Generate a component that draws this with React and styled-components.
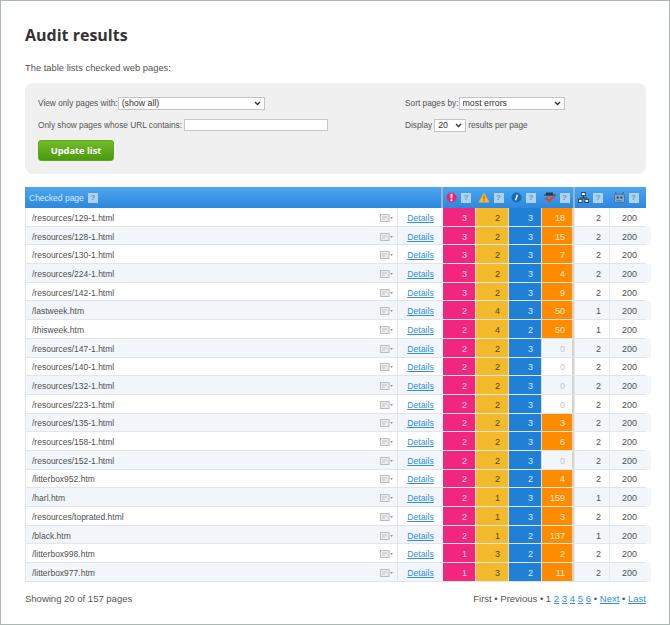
import React from 'react'
import styled, { createGlobalStyle, css } from 'styled-components'

const GlobalStyle = createGlobalStyle`
    html, body {
        margin: 0;
        padding: 0;
        background: #ffffff;
    }
    * {
        box-sizing: border-box;
    }
`;

const Page = styled.div`
    width: 670px;
    height: 625px;
    border: 1px solid #a8b8b3;
    padding: 23px 23px 0 24px;
    font-family: "Liberation Sans", Arial, sans-serif;
    font-size: 8.3px;
    color: #555555;
`;

const Title = styled.h1`
    margin: 0;
    height: 22px;
    line-height: 22px;
    font-family: "Open Sans", sans-serif;
    font-size: 16px;
    font-weight: 700;
    color: #333333;
`;

const Intro = styled.p`
    margin: 15px 0 0;
    height: 13px;
    line-height: 13px;
    font-size: 9.4px;
    color: #555555;
`;

const Panel = styled.div`
    margin-top: 9px;
    height: 91px;
    border-radius: 8px;
    background: #f0f0f0;
    padding: 13px 13px 0;
    display: grid;
    grid-template-columns: 367px 1fr;
`;

const Column = styled.div`
    display: flex;
    flex-direction: column;
    gap: 8px;
`;

const Field = styled.div`
    display: flex;
    align-items: center;
    gap: ${props => props.$gap ?? 2}px;
    height: 14px;
`;

const chevron = `url("data:image/svg+xml,%3Csvg xmlns='http://www.w3.org/2000/svg' width='7' height='5'%3E%3Cpath d='M1 1l2.5 2.5L6 1' fill='none' stroke='%23333' stroke-width='1.4'/%3E%3C/svg%3E")`;

const Select = styled.select`
    appearance: none;
    width: ${props => props.$width}px;
    height: 13px;
    padding: 0 0 0 3px;
    border: 1px solid #c4c4c4;
    border-radius: 0;
    background: #ffffff ${chevron} no-repeat right 3px center;
    font-family: "Liberation Sans", Arial, sans-serif;
    font-size: 8.8px;
    color: #333333;
`;

const TextInput = styled.input`
    width: 144px;
    height: 12px;
    padding: 0;
    border: 1px solid #c8c8c8;
    background: #ffffff;
`;

const UpdateButton = styled.button`
    width: 76px;
    height: 21px;
    padding: 0;
    border: 1px solid #5fa81e;
    border-radius: 3px;
    background: linear-gradient(#74bb2b, #489a0c);
    color: #ffffff;
    font-family: "Open Sans", sans-serif;
    font-size: 9.3px;
    font-weight: 700;
`;

const Table = styled.div`
    margin-top: 13px;
`;

const columns = '372px 46px 32px 33px 33px 33px 35px 37px';

const HeaderRow = styled.div`
    display: grid;
    grid-template-columns: 416px 132px 73px;
    height: 21px;
    background: linear-gradient(#4ea6ef, #2c88de);
    color: #d5e9fa;
    font-size: 8.5px;
`;

const HeaderCell = styled.div`
    display: flex;
    align-items: center;
    gap: 4px;
    justify-content: center;
`;

const PageHeader = styled(HeaderCell)`
    justify-content: flex-start;
    padding-left: 4px;
`;

const HeaderGroup = styled.div`
    display: grid;
    grid-template-columns: ${props => props.$cols};
    border-left: 2px solid #8db6d8;
`;

const Help = styled.span`
    width: 10px;
    height: 10px;
    background: #add3f0;
    color: #6b98bc;
    font-size: 8px;
    font-weight: 700;
    line-height: 10px;
    text-align: center;
`;

const Row = styled.div`
    display: grid;
    grid-template-columns: ${columns};
    height: 18.7px;
    border-bottom: 1px solid #e2e6e9;
    background: ${props => props.$even ? '#f2f6fa' : '#ffffff'};
    box-shadow: ${props => props.$even ? '5px 0 0 #f4f7fa' : 'none'};
`;

// text sits 1px below the middle of the row
const cellText = css`
    display: flex;
    align-items: center;
    padding-top: 2px;
`;

const PageCell = styled.div`
    ${cellText}
    justify-content: space-between;
    padding-left: 6px;
    padding-right: 4px;
    font-size: 8.5px;
    color: #505050;
    border-left: 1px solid #e2e6e9;
`;

const DetailsCell = styled.div`
    ${cellText}
    justify-content: center;
    border-left: 1px solid #e2e6e9;
`;

const TextLink = styled.a`
    color: #2f8fdc;
    text-decoration: underline;
    font-size: ${props => props.$size || 8.7}px;
`;

const Score = styled.div`
    ${cellText}
    justify-content: flex-end;
    padding-right: 8px;
    background: ${props => props.$bg};
    color: ${props => props.$color};
    font-size: 9px;
    & + & {
        border-left: 1px solid #e6dcd2;
    }
`;

const LastScore = styled(Score)`
    border-right: 2px solid #d8d2cc;
    padding-right: 7px;
`;

const Plain = styled.div`
    ${cellText}
    justify-content: flex-end;
    padding-right: ${props => props.$right}px;
    border-left: 1px solid #e8ebee;
    color: #505050;
    font-size: 9px;
`;

const Footer = styled.div`
    margin-top: 11px;
    display: flex;
    justify-content: space-between;
    font-size: 9.5px;
    color: #555555;
`;

const Pager = styled.div`
    display: flex;
    gap: 2.7px;
`;

const ErrorIcon = () => (
    <svg width="11" height="11" viewBox="0 0 12 12">
        <circle cx="6" cy="6" r="5.5" fill="#e8256f" />
        <rect x="5" y="2" width="2" height="5" fill="#fff" />
        <rect x="5" y="8" width="2" height="2" fill="#fff" />
    </svg>
);

const WarnIcon = () => (
    <svg width="12" height="11" viewBox="0 0 13 12">
        <path d="M6.5 0.5 L12.5 11.5 H0.5 Z" fill="#f5b62b" />
        <rect x="6" y="4" width="1" height="4" fill="#7a5a10" />
        <rect x="6" y="9" width="1" height="1" fill="#7a5a10" />
    </svg>
);

const InfoIcon = () => (
    <svg width="11" height="11" viewBox="0 0 12 12">
        <circle cx="6" cy="6" r="5.5" fill="#1c69b4" />
        <path d="M7 3 L5 9" stroke="#fff" strokeWidth="1.6" />
    </svg>
);

const SpellIcon = () => (
    <svg width="12" height="11" viewBox="0 0 12 11">
        <rect x="2" y="0.5" width="7" height="3" fill="#2e3a46" />
        <path d="M0 3 H12" stroke="#2e3a46" />
        <path d="M1.5 5.5 L5 9 L10.5 4" fill="none" stroke="#e2432e" strokeWidth="2.4" />
    </svg>
);

const SiteIcon = () => (
    <svg width="11" height="11" viewBox="0 0 12 12" fill="#ffffff" stroke="#26394a" strokeWidth="1">
        <rect x="4" y="0.5" width="4" height="3.5" />
        <path d="M6 4 V6.5 M2.5 8 V6.5 H9.5 V8" fill="none" />
        <rect x="0.5" y="8" width="4" height="3.5" />
        <rect x="7.5" y="8" width="4" height="3.5" />
    </svg>
);

const RobotIcon = () => (
    <svg width="11" height="11" viewBox="0 0 12 12">
        <path d="M2 0 V3 M10 0 V3" stroke="#3c5a78" />
        <rect x="0.5" y="2.5" width="11" height="9" rx="1" fill="#7fa9cf" stroke="#4a6f92" />
        <rect x="3" y="5" width="2" height="2" fill="#26394a" />
        <rect x="7" y="5" width="2" height="2" fill="#26394a" />
        <path d="M3 9.5 H9" stroke="#26394a" strokeDasharray="1 1" />
    </svg>
);

const MailIcon = () => (
    <svg width="13" height="8" viewBox="0 0 13 8">
        <rect x="0.5" y="0.5" width="8.5" height="7" fill="#ececec" stroke="#bcbcbc" />
        <path d="M2 3 H7 M2 5 H5" stroke="#c4c4c4" />
        <path d="M10 3 H13 L11.5 5 Z" fill="#999999" />
    </svg>
);

const rows = [
    ['/resources/129-1.html', 3, 2, 3, 18, 2],
    ['/resources/128-1.html', 3, 2, 3, 15, 2],
    ['/resources/130-1.html', 3, 2, 3, 7, 2],
    ['/resources/224-1.html', 3, 2, 3, 4, 2],
    ['/resources/142-1.html', 3, 2, 3, 9, 2],
    ['/lastweek.htm', 2, 4, 3, 50, 1],
    ['/thisweek.htm', 2, 4, 2, 50, 1],
    ['/resources/147-1.html', 2, 2, 3, 0, 2],
    ['/resources/140-1.html', 2, 2, 3, 0, 2],
    ['/resources/132-1.html', 2, 2, 3, 0, 2],
    ['/resources/223-1.html', 2, 2, 3, 0, 2],
    ['/resources/135-1.html', 2, 2, 3, 3, 2],
    ['/resources/158-1.html', 2, 2, 3, 6, 2],
    ['/resources/152-1.html', 2, 2, 3, 0, 2],
    ['/litterbox952.htm', 2, 2, 2, 4, 2],
    ['/harl.htm', 2, 1, 3, 159, 1],
    ['/resources/toprated.html', 2, 1, 3, 3, 2],
    ['/black.htm', 2, 1, 2, 137, 1],
    ['/litterbox998.htm', 1, 3, 2, 2, 2],
    ['/litterbox977.htm', 1, 3, 2, 11, 2],
];

const App = () => {
    return (
        <Page>
            <GlobalStyle />
            <Title>Audit results</Title>
            <Intro>The table lists checked web pages:</Intro>
            <Panel>
                <Column>
                    <Field $gap={0}>
                        View only pages with:
                        <Select $width={147} defaultValue="all">
                            <option value="all">(show all)</option>
                        </Select>
                    </Field>
                    <Field>
                        Only show pages whose URL contains:
                        <TextInput type="text" />
                    </Field>
                    <UpdateButton>Update list</UpdateButton>
                </Column>
                <Column>
                    <Field $gap={0}>
                        Sort pages by:
                        <Select $width={106} defaultValue="errors">
                            <option value="errors">most errors</option>
                        </Select>
                    </Field>
                    <Field>
                        Display
                        <Select $width={32} defaultValue="20">
                            <option value="20">20</option>
                        </Select>
                        results per page
                    </Field>
                </Column>
            </Panel>
            <Table>
                <HeaderRow>
                    <PageHeader>Checked page <Help>?</Help></PageHeader>
                    <HeaderGroup $cols="31px 33px 33px 33px">
                        <HeaderCell><ErrorIcon /><Help>?</Help></HeaderCell>
                        <HeaderCell><WarnIcon /><Help>?</Help></HeaderCell>
                        <HeaderCell><InfoIcon /><Help>?</Help></HeaderCell>
                        <HeaderCell><SpellIcon /><Help>?</Help></HeaderCell>
                    </HeaderGroup>
                    <HeaderGroup $cols="31px 40px">
                        <HeaderCell><SiteIcon /><Help>?</Help></HeaderCell>
                        <HeaderCell><RobotIcon /><Help>?</Help></HeaderCell>
                    </HeaderGroup>
                </HeaderRow>
                {rows.map((row, i) => (
                    <Row key={row[0]} $even={i % 2 === 1}>
                        <PageCell>{row[0]}<MailIcon /></PageCell>
                        <DetailsCell><TextLink href="#">Details</TextLink></DetailsCell>
                        <Score $bg="#f0267f" $color="#ffd0e4">{row[1]}</Score>
                        <Score $bg="#f3bb2b" $color="#5a4510">{row[2]}</Score>
                        <Score $bg="#1f80d6" $color="#cfe6fa">{row[3]}</Score>
                        {row[4] === 0
                            ? <LastScore $bg="transparent" $color="#c4c8cc">0</LastScore>
                            : <LastScore $bg="#ff8c00" $color="#ffe8cc">{row[4]}</LastScore>}
                        <Plain $right={8}>{row[5]}</Plain>
                        <Plain $right={9}>200</Plain>
                    </Row>
                ))}
            </Table>
            <Footer>
                <span>Showing 20 of 157 pages</span>
                <Pager>
                    First • Previous • 1
                    <TextLink $size={9.5} href="#">2</TextLink>
                    <TextLink $size={9.5} href="#">3</TextLink>
                    <TextLink $size={9.5} href="#">4</TextLink>
                    <TextLink $size={9.5} href="#">5</TextLink>
                    <TextLink $size={9.5} href="#">6</TextLink>
                    •
                    <TextLink $size={9.5} href="#">Next</TextLink>
                    •
                    <TextLink $size={9.5} href="#">Last</TextLink>
                </Pager>
            </Footer>
        </Page>
    )
}

export default App
